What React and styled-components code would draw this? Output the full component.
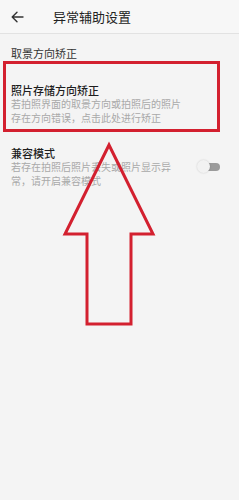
import React from "react";
import styled, { createGlobalStyle } from "styled-components";

const Global = createGlobalStyle`
  html, body { margin: 0; padding: 0; background: #f4f4f4; }
  body { font-family: "Noto Sans CJK SC", "Noto Sans", sans-serif; }
  * { box-sizing: border-box; }
`;

const Page = styled.div`
  position: relative;
  width: 239px;
  height: 500px;
  background: #f4f4f4;
  overflow: hidden;
`;

const Header = styled.div`
  height: 34px;
  background: #f7f7f7;
  border-bottom: 1px solid #e2e2e2;
  display: flex;
  align-items: center;
  padding-left: 10px;
`;

const BackButton = styled.div`
  width: 14px;
  height: 14px;
  display: flex;
  align-items: center;
  justify-content: center;
  margin-right: 29px;
`;

const Title = styled.div`
  font-size: 13px;
  color: #222;
  line-height: 16px;
  padding-top: 1px;
`;

const SectionTitle = styled.div`
  font-size: 11px;
  line-height: 14px;
  color: #333;
  padding: 12px 11px 0;
`;

const Item = styled.div`
  display: flex;
  align-items: center;
  padding: 0 19px 0 11px;
  margin-top: ${(p) => p.$gap}px;
`;

const ItemText = styled.div`
  flex: 1;
  min-width: 0;
`;

const ItemTitle = styled.div`
  font-size: 11px;
  line-height: 14px;
  color: #1e1e1e;
  font-weight: 500;
`;

const ItemDesc = styled.div`
  font-size: 10px;
  line-height: 14px;
  color: #a9a9a9;
  width: 172px;
`;

const Switch = styled.div`
  position: relative;
  width: 23px;
  height: 14px;
  flex: none;
  margin-left: 8px;
`;

const Track = styled.div`
  position: absolute;
  left: 3px;
  right: 0;
  top: 3px;
  height: 8px;
  border-radius: 4px;
  background: #9b9b9b;
`;

const Knob = styled.div`
  position: absolute;
  left: 0;
  top: 0;
  width: 13px;
  height: 13px;
  border-radius: 50%;
  background: #f2f2f2;
  box-shadow: 0 0 2px rgba(0, 0, 0, 0.18);
`;

const Annotation = styled.svg`
  position: absolute;
  left: 0;
  top: 0;
  pointer-events: none;
`;

export default function App() {
  return (
    <Page>
      <Global />
      <Header>
        <BackButton>
          <svg width="13" height="12" viewBox="0 0 13 12" fill="none">
            <path d="M12 6H1.5M6 1.2L1.2 6L6 10.8" stroke="#333" strokeWidth="1.4" strokeLinecap="round" strokeLinejoin="round" />
          </svg>
        </BackButton>
        <Title>异常辅助设置</Title>
      </Header>
      <SectionTitle>取景方向矫正</SectionTitle>
      <Item $gap={23}>
        <ItemText>
          <ItemTitle>照片存储方向矫正</ItemTitle>
          <ItemDesc>若拍照界面的取景方向或拍照后的照片存在方向错误，点击此处进行矫正</ItemDesc>
        </ItemText>
      </Item>
      <Item $gap={21}>
        <ItemText>
          <ItemTitle>兼容模式</ItemTitle>
          <ItemDesc>若存在拍照后照片丢失或照片显示异常，请开启兼容模式</ItemDesc>
        </ItemText>
        <Switch>
          <Track />
          <Knob />
        </Switch>
      </Item>
      <Annotation width="239" height="500" viewBox="0 0 239 500">
        <rect x="4.5" y="62.5" width="214" height="68" fill="none" stroke="#d3202f" strokeWidth="3" />
        <polygon
          points="109,145 153,234 131,234 131,324 87,324 87,234 65,234"
          fill="none"
          stroke="#d3202f"
          strokeWidth="3"
          strokeLinejoin="miter"
        />
      </Annotation>
    </Page>
  );
}
